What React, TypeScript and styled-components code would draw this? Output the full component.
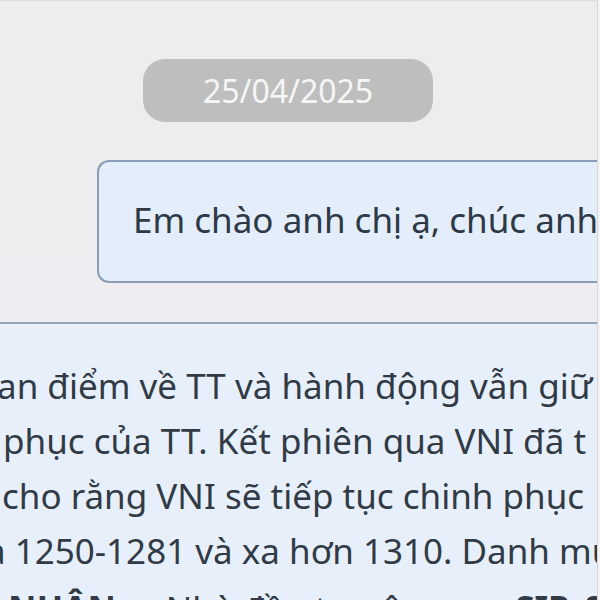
import React from "react";
import styled, { createGlobalStyle } from "styled-components";

const GlobalStyle = createGlobalStyle`
  html, body { margin: 0; padding: 0; background: #f4f4f5; }
  body { font-family: "Noto Sans", "Open Sans", sans-serif; }
`;

const Frame = styled.div`
  width: 597px;
  height: 599px;
  border-top: 1px solid #dcdcdc;
  border-right: 1px solid #d6d6d8;
  background: #ededee;
  display: flex;
  flex-direction: column;
  overflow: hidden;
`;

const DateRow = styled.div`
  display: flex;
  padding: 58px 0 0 143px;
`;

const DatePill = styled.div`
  width: 290px;
  height: 63px;
  border-radius: 22px;
  background: #bebebf;
  color: #f6f6f6;
  font-size: 32px;
  line-height: 63px;
  text-align: center;
`;

const BubbleRow = styled.div`
  display: flex;
  padding: 38px 0 39px 97px;
  background: linear-gradient(#ededee, #efedf1);
`;

const Bubble = styled.div`
  flex: 1;
  height: 119px;
  box-sizing: content-box;
  border: 2px solid #8b9db6;
  border-right: none;
  border-radius: 12px 0 0 12px;
  background: #e3eefa;
  padding: 0 0 0 34px;
  overflow: hidden;
`;

const BubbleText = styled.div`
  white-space: nowrap;
  font-size: 35px;
  line-height: 35px;
  padding-top: 40px;
  color: #2e3946;
`;

const Panel = styled.div`
  flex: 1;
  border-top: 2px solid #93a6bd;
  background: #e7f0fa;
  padding-top: 34px;
  overflow: hidden;
  display: flex;
  flex-direction: column;
  gap: 3px;
`;

const Paragraph = styled.div`
  display: flex;
  flex-direction: column;
`;

const Line = styled.div<{ $shift: number }>`
  white-space: nowrap;
  font-size: 35px;
  line-height: 55px;
  color: #323b45;
  margin-left: ${(p) => p.$shift}px;
`;

const Strong = styled.b`
  font-weight: 700;
`;

const Dot = styled.span`
  display: inline-block;
  width: 20px;
  height: 20px;
  margin: 0 6px 0 14px;
  border-radius: 50%;
  background: #2a7fd6;
  vertical-align: -2px;
`;

export default function App() {
  return (
    <>
      <GlobalStyle />
      <Frame>
        <DateRow>
          <DatePill>25/04/2025</DatePill>
        </DateRow>
        <BubbleRow>
          <Bubble>
            <BubbleText>Em chào anh chị ạ, chúc anh chị một ngày tốt lành</BubbleText>
          </Bubble>
        </BubbleRow>
        <Panel>
          <Paragraph>
            <Line $shift={-3}>an điểm về TT và hành động vẫn giữ vững</Line>
            <Line $shift={3}>phục của TT. Kết phiên qua VNI đã t</Line>
            <Line $shift={2}>cho rằng VNI sẽ tiếp tục chinh phục</Line>
            <Line $shift={-14}>a 1250-1281 và xa hơn 1310. Danh mục</Line>
          </Paragraph>
          <Paragraph>
            <Line $shift={8}>
              <Strong>NHẬN:</Strong>
              <Dot />
              Nhà đầu tư nên mua <Strong>SIP, S</Strong>
            </Line>
          </Paragraph>
        </Panel>
      </Frame>
    </>
  );
}
